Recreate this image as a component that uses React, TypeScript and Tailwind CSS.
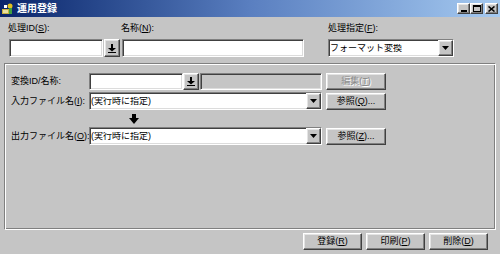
import React from "react";

const raised =
  "bg-[#c5c5c5] border border-t-white border-l-white border-r-[#404040] border-b-[#404040] shadow-[inset_-1px_-1px_0_#808080,inset_1px_1px_0_#e4e4e4]";
const sunken =
  "bg-white border border-t-[#808080] border-l-[#808080] border-r-white border-b-white shadow-[inset_1px_1px_0_#404040,inset_-1px_-1px_0_#dcdcdc]";
const sunkenGray =
  "bg-[#c5c5c5] border border-t-[#808080] border-l-[#808080] border-r-white border-b-white shadow-[inset_1px_1px_0_#404040,inset_-1px_-1px_0_#dcdcdc]";

function DownloadIcon() {
  return (
    <svg width="8" height="9" viewBox="0 0 8 9">
      <rect x="3" y="0" width="2" height="5" fill="#000" />
      <polygon points="0,4 8,4 4,7.5" fill="#000" />
      <rect x="0" y="8" width="8" height="1" fill="#000" />
    </svg>
  );
}

function DropArrow() {
  return (
    <svg width="7" height="4" viewBox="0 0 7 4">
      <polygon points="0,0 7,0 3.5,4" fill="#000" />
    </svg>
  );
}

function Combo({ text, w }: { text: string; w: string }) {
  return (
    <div className={`${sunken} ${w} h-[18px] flex items-center`}>
      <span className="flex-1 pl-[1px] text-[9px] leading-none truncate">{text}</span>
      <div className={`${raised} w-[15px] h-full flex items-center justify-center`}>
        <DropArrow />
      </div>
    </div>
  );
}

function Btn({ children, disabled, w = "w-[60px]" }: { children: React.ReactNode; disabled?: boolean; w?: string }) {
  return (
    <div
      className={`${raised} ${w} h-[17px] flex items-center justify-center text-[9px] leading-none whitespace-nowrap ${
        disabled ? "text-[#8a8a8a] [text-shadow:1px_1px_0_#fff]" : "text-black"
      }`}
    >
      {children}
    </div>
  );
}

export default function App() {
  return (
    <div className="w-[500px] h-[254px] bg-[#c5c5c5] flex flex-col overflow-hidden font-['Liberation_Sans','Noto_Sans_CJK_JP',sans-serif] text-black">
      {/* Title bar */}
      <div className="h-[17px] bg-gradient-to-r from-[#0a246a] via-[#5a7fc0] to-[#a6caf0] flex items-center pl-[2px] pr-[2px]">
        <svg width="12" height="12" viewBox="0 0 12 12" className="mr-[3px]">
          <rect x="0" y="6" width="7" height="5" fill="#c8b040" />
          <rect x="1" y="7" width="5" height="3" fill="#e8e0a0" />
          <circle cx="8" cy="3" r="2.5" fill="#e0c020" />
          <rect x="7" y="5" width="3" height="6" fill="#40a040" />
          <rect x="2" y="2" width="3" height="3" fill="#ffffff" />
        </svg>
        <span className="text-white font-bold text-[10px] leading-none">運用登録</span>
        <div className="flex-1" />
        <div className="flex items-center">
          <div className={`${raised} w-[13px] h-[11px] flex items-end justify-center pb-[1px]`}>
            <div className="w-[6px] h-[2px] bg-black" />
          </div>
          <div className={`${raised} w-[13px] h-[11px] flex items-center justify-center`}>
            <div className="w-[8px] h-[7px] border border-black border-t-2" />
          </div>
          <div className={`${raised} w-[13px] h-[11px] flex items-center justify-center ml-[2px]`}>
            <svg width="7" height="6" viewBox="0 0 7 6">
              <path d="M0.5 0.5 L6.5 5.5 M6.5 0.5 L0.5 5.5" stroke="#000" strokeWidth="1.6" />
            </svg>
          </div>
        </div>
      </div>

      {/* Top section */}
      <div className="flex pt-[4px] pl-[8px]">
        <div className="flex flex-col">
          <div className="h-[14px] text-[9px] leading-[14px] mb-[4px] whitespace-nowrap">
            処理ID(<u>S</u>):
          </div>
          <div className="flex items-center ml-[1px]">
            <div className={`${sunken} w-[94px] h-[18px]`} />
            <div className={`${raised} w-[16px] h-[18px] ml-[1px] flex items-center justify-center`}>
              <DownloadIcon />
            </div>
          </div>
        </div>
        <div className="flex flex-col ml-[1px]">
          <div className="h-[14px] text-[9px] leading-[14px] mb-[4px] whitespace-nowrap">
            名称(<u>N</u>):
          </div>
          <div className={`${sunken} w-[182px] h-[18px] ml-[1px]`} />
        </div>
        <div className="flex flex-col ml-[24px]">
          <div className="h-[14px] text-[9px] leading-[14px] mb-[4px] whitespace-nowrap">
            処理指定(<u>F</u>):
          </div>
          <Combo text="フォーマット変換" w="w-[126px]" />
        </div>
      </div>

      {/* Group box */}
      <div className="mx-[4px] mt-[6px] h-[167px] border border-t-[#808080] border-l-[#808080] border-r-white border-b-white shadow-[inset_1px_1px_0_#fff,inset_-1px_-1px_0_#808080] pt-[8px] pl-[6px] flex flex-col">
        <div className="flex items-center h-[18px]">
          <div className="w-[78px] shrink-0 text-[9px] leading-none whitespace-nowrap">変換ID/名称:</div>
          <div className={`${sunken} w-[94px] h-[17px]`} />
          <div className={`${raised} w-[16px] h-[17px] flex items-center justify-center`}>
            <DownloadIcon />
          </div>
          <div className={`${sunkenGray} w-[122px] h-[17px] ml-[1px]`} />
          <div className="ml-[4px]">
            <Btn disabled>
              編集(<u>T</u>)
            </Btn>
          </div>
        </div>
        <div className="flex items-center h-[18px] mt-[2px]">
          <div className="w-[78px] shrink-0 text-[9px] leading-none whitespace-nowrap">
            入力ファイル名(<u>I</u>):
          </div>
          <Combo text="(実行時に指定)" w="w-[233px]" />
          <div className="ml-[4px]">
            <Btn>
              参照(<u>Q</u>)...
            </Btn>
          </div>
        </div>
        <div className="h-[17px] flex items-center pl-[118px]">
          <svg width="10" height="10" viewBox="0 0 10 10">
            <rect x="3" y="0" width="4" height="5" fill="#000" />
            <polygon points="0,4 10,4 5,10" fill="#000" />
          </svg>
        </div>
        <div className="flex items-center h-[18px]">
          <div className="w-[78px] shrink-0 text-[9px] leading-none whitespace-nowrap">
            出力ファイル名(<u>O</u>):
          </div>
          <Combo text="(実行時に指定)" w="w-[233px]" />
          <div className="ml-[4px]">
            <Btn>
              参照(<u>Z</u>)...
            </Btn>
          </div>
        </div>
      </div>

      {/* Bottom buttons */}
      <div className="flex justify-end gap-[4px] pr-[12px] mt-[3px]">
        <Btn w="w-[59px]">
          登録(<u>R</u>)
        </Btn>
        <Btn w="w-[59px]">
          印刷(<u>P</u>)
        </Btn>
        <Btn w="w-[59px]">
          削除(<u>D</u>)
        </Btn>
      </div>
    </div>
  );
}
